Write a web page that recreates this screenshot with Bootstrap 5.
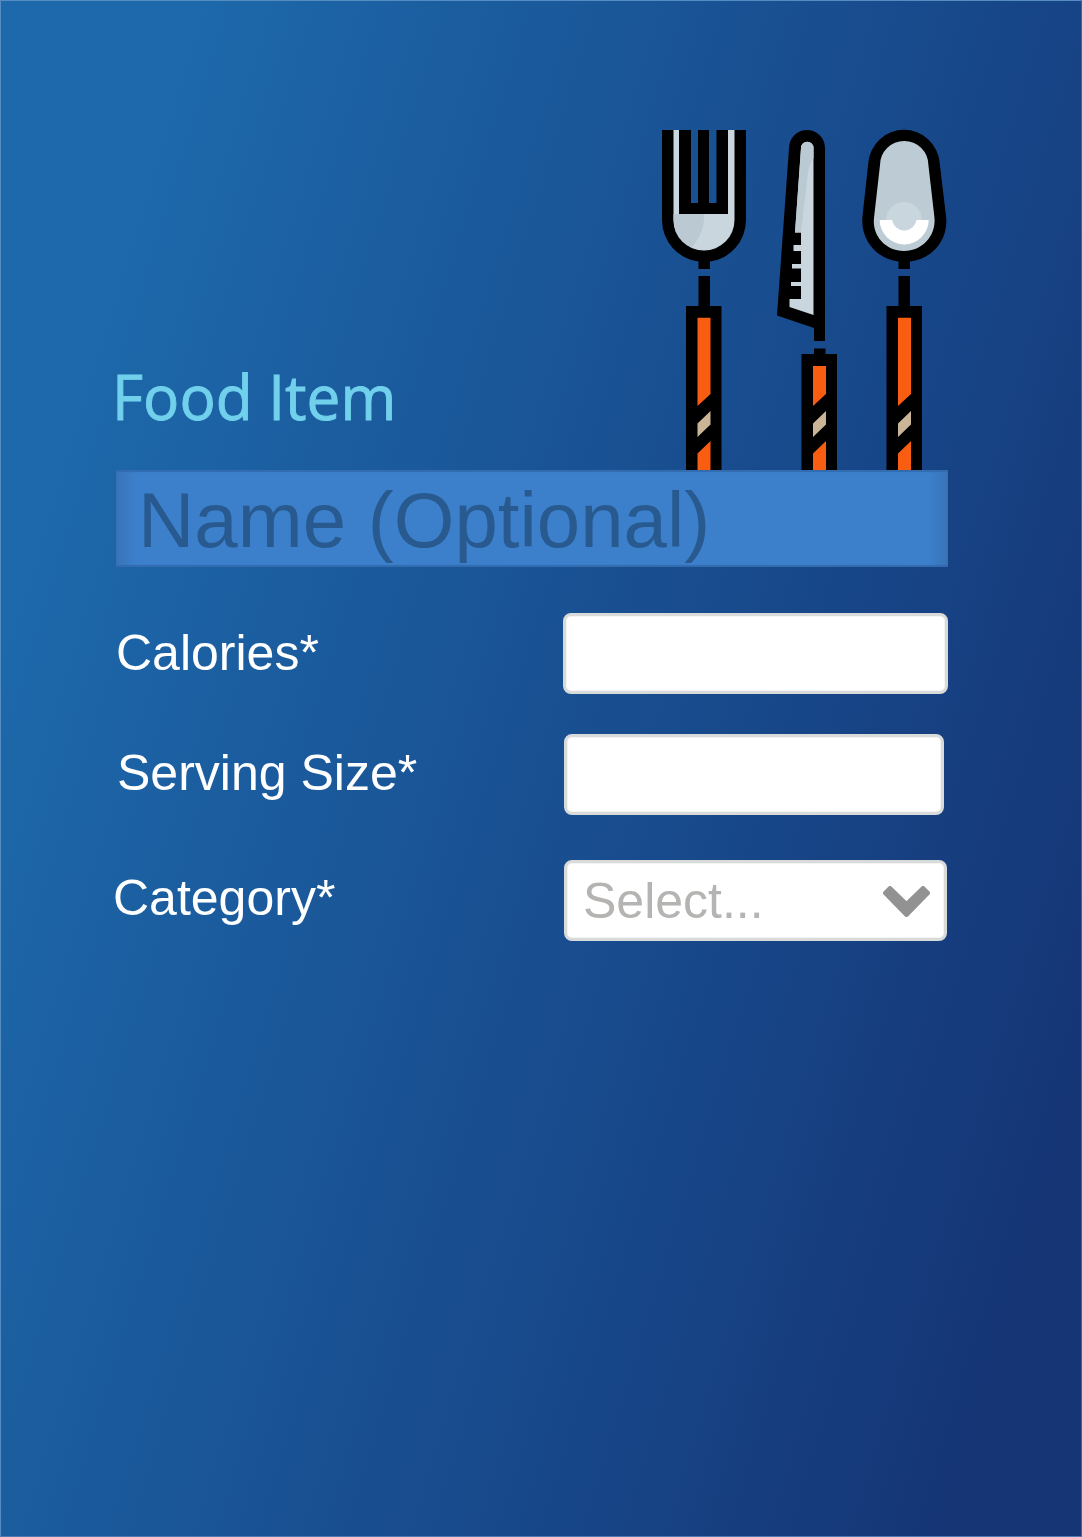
<!DOCTYPE html>
<html lang="en">
<head>
<meta charset="utf-8">
<meta name="viewport" content="width=device-width, initial-scale=1">
<title>Food Item</title>
<link href="https://cdn.jsdelivr.net/npm/bootstrap@5.3.0/dist/css/bootstrap.min.css" rel="stylesheet">
<style>
body{margin:0;font-family:"Liberation Sans",Arial,sans-serif;background:#153777}
.screen{width:1082px;height:1537px;padding:128px 133px 0 115px;border:1px solid;border-color:#558dc2 #4260a4 #5079b4 #558dc2;background:linear-gradient(107deg,#1d69ab 12%,#174688 66%,#153575 91%);background-origin:border-box;overflow:hidden}
.hero{height:341px}
.title{font:400 63px/72px "Open Sans","Noto Sans",sans-serif;color:#71d1ec;-webkit-text-stroke:.9px #71d1ec;margin:0 0 38px -4px;transform:scaleX(.957);transform-origin:0 0;white-space:nowrap}
.cutlery{width:290px;height:341px;margin-right:-2px;flex:none}
.name-field,.name-field:focus{height:97px;border:0;border-radius:0;padding:3px 20px 0 22px;font-size:78px;line-height:94px;color:#285a90;box-shadow:inset 0 2px 1px #326bae,inset 0 -2px 1px #326bae;background:linear-gradient(90deg,#3873b6,#3c80cc 20px,#3c80cc calc(100% - 20px),#3873b6)}
.name-field::placeholder{color:#285a90;opacity:1}
.field-label{font-size:50px;line-height:80px;height:81px;color:#fff;white-space:nowrap}
.field-box{height:81px;border:3px solid #d9dada;border-radius:8px;background:#fff;box-shadow:inset 0 0 0 1px #f4f4f4;flex:none}
.w-cal{width:385px}.w-serv{width:380px;margin-right:4px}.w-cat{width:383px;margin-right:1px;padding:2px 14px 0 16px}
.row-cal{margin-top:46px}.row-serv{margin-top:40px}.row-cat{margin-top:45px}
.shift-serv{margin-left:1px;line-height:78px}.shift-cat{margin-left:-3px;line-height:76px}
.hint{font-size:50px;line-height:75px;color:#b5b4b3}
</style>
<script src="https://cdn.jsdelivr.net/npm/bootstrap@5.3.0/dist/js/bootstrap.bundle.min.js" defer></script>
</head>
<body>
<main class="screen">
<form>
<header class="hero d-flex justify-content-between align-items-end">
<h1 class="title">Food Item</h1>
<svg class="cutlery" viewBox="660 129 290 341" aria-hidden="true">
<defs>
<clipPath id="bowl"><path d="M673.5 130V220A30.5 30.5 0 0 0 734.5 220V130Z"/></clipPath>
</defs>
<!-- fork -->
<path d="M662 130V220A42 42 0 0 0 698.5 261.6V269H710V261.6A42 42 0 0 0 746 220V130H734V214H674V130Z"/>
<g clip-path="url(#bowl)"><path fill="#c9d6de" d="M673 130H679V214H728V130H735V252H673Z"/><path fill="#bac9d2" d="M673 214H704Q705 233 691 248L673 250Z"/></g>
<path d="M679 130H691V203H698V130H709V203H716.5V130H728V214H679Z"/>
<path d="M698.5 276H710V307H698.5Z"/>
<!-- knife -->
<path d="M789 148A18 18 0 0 1 825 148V341H814V328L777 315.5Z"/>
<path fill="#c9d6de" d="M801 148A6.2 6.2 0 0 1 813.5 148V315L789.5 307V299H801V286H791V282H801V268.5H792V264H801V251H793.5V245H801V232.5H795Z"/>
<path fill="#bac9d2" d="M801 148A6.2 6.2 0 0 1 813.5 148V158Q808 165 807 180L801 232.5H795Z"/>
<!-- spoon -->
<path d="M868.3 163A35.8 35.8 0 0 1 939.7 163L946 216C949 240 932 259 910 261.6V269H898.5V261.6C877 259 860 240 862.5 216Z"/>
<path fill="#bdccd4" d="M880 165A24.2 24 0 0 1 928.4 165L934.5 218C936 236 922 251 904 251S872 236 874 218Z"/>
<circle cx="904" cy="220" r="18" fill="#c9d6de"/>
<path fill="#fff" d="M879.7 220H892A12.4 12.4 0 0 0 916.5 220H928.7A24.5 24.5 0 0 1 879.7 220Z"/>
<path d="M898.5 276H910V307H898.5Z"/>
<!-- handles -->
<path d="M686 306H721.5V470H686ZM801.5 354H814V348.5H825.5V354H837V470H801.5ZM886.5 306H922V470H886.5Z"/>
<path fill="#f95d11" d="M697.5 317.7H710.5V394L697.5 406ZM813 366H826V394L813 406ZM898 317.7H911V394L898 406Z"/>
<path fill="#f95d11" d="M697.5 453.5L710.5 441V470H697.5ZM813 453.5L826 441V470H813ZM898 453.5L911 441V470H898Z"/>
<path fill="#cbb597" d="M697.5 423.5L710.5 411V424.5L697.5 437ZM813 423.5L826 411V424.5L813 437ZM898 423.5L911 411V424.5L898 437Z"/>
</svg>
</header>
<input class="form-control name-field" type="text" placeholder="Name (Optional)" aria-label="Name (Optional)">
<div class="row-cal d-flex justify-content-between">
<label class="field-label" for="cal">Calories*</label><input id="cal" class="form-control field-box w-cal" type="text">
</div>
<div class="row-serv d-flex justify-content-between">
<label class="field-label shift-serv" for="serv">Serving Size*</label><input id="serv" class="form-control field-box w-serv" type="text">
</div>
<div class="row-cat d-flex justify-content-between">
<span class="field-label shift-cat">Category*</span>
<button type="button" class="btn field-box w-cat d-flex justify-content-between align-items-center"><span class="hint">Select...</span>
<svg width="47" height="31" viewBox="883 886 47 31" aria-hidden="true"><path d="M890 888L885 893L906.5 915L928 893L923 888L906.5 904Z" fill="#929292" stroke="#929292" stroke-width="4" stroke-linejoin="round"/></svg></button>
</div>
</form>
</main>
</body>
</html>
